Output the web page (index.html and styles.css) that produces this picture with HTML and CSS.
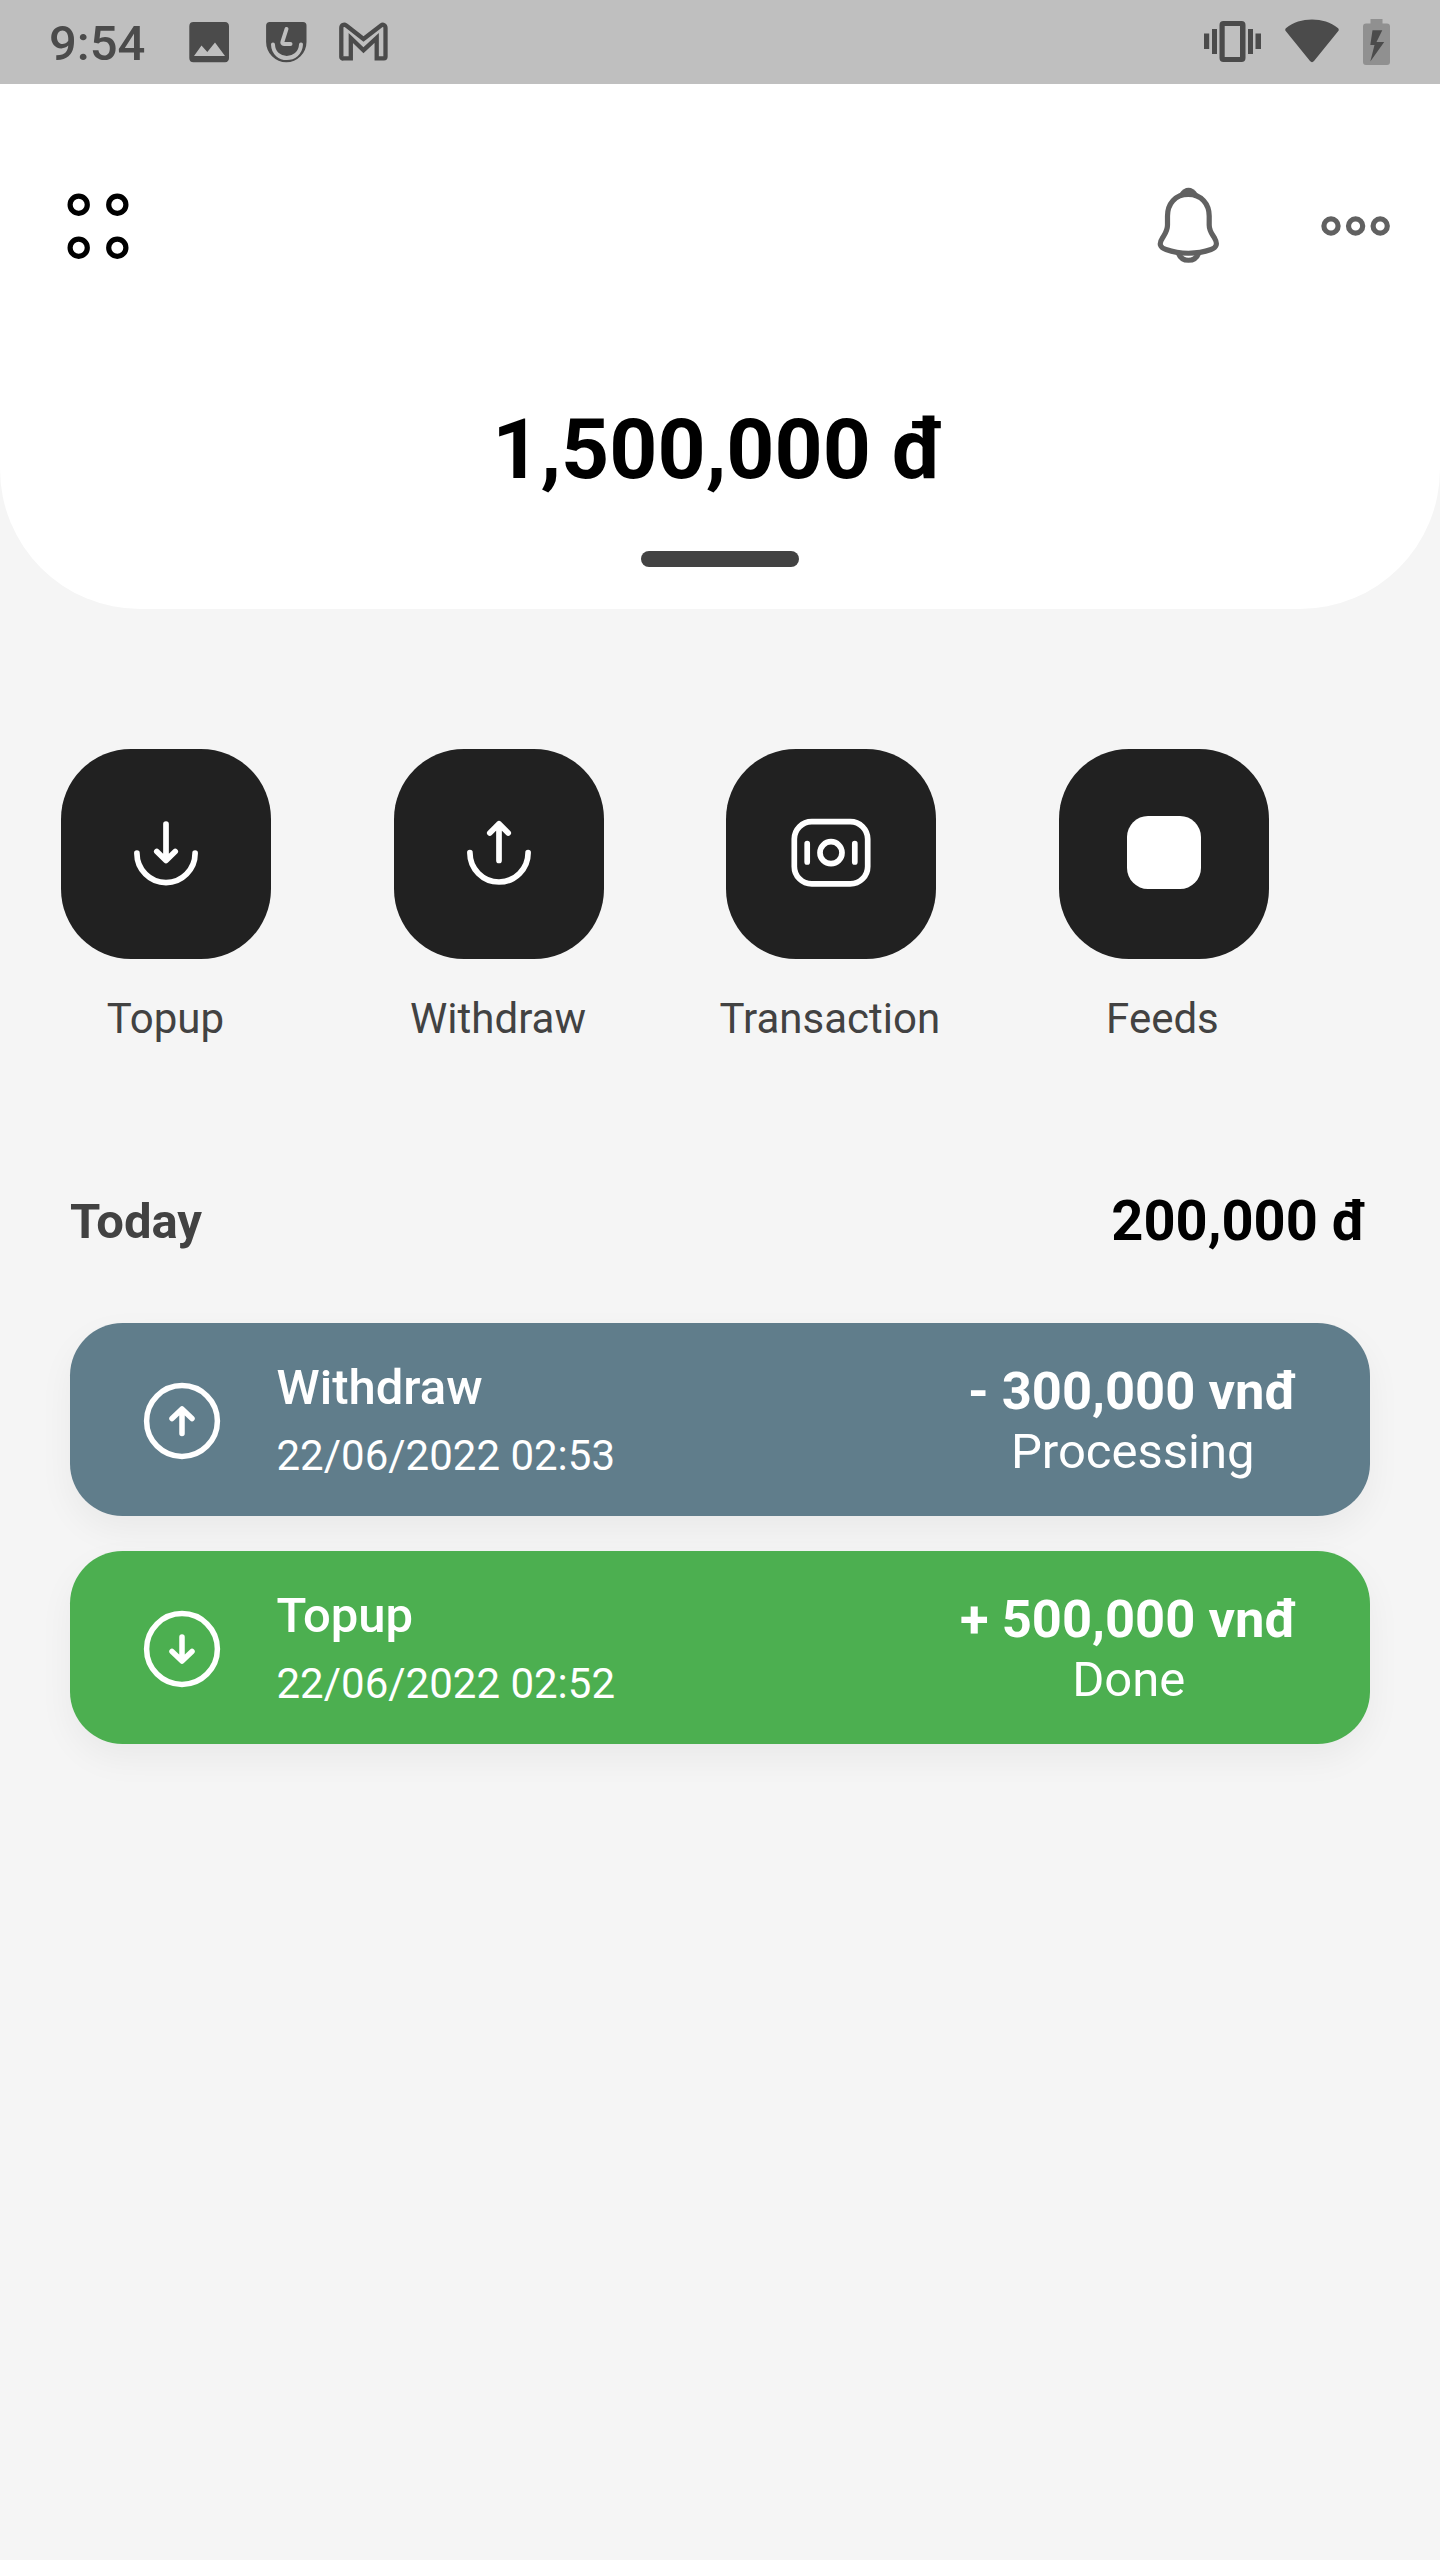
FILE: index.html
```html
<!DOCTYPE html>
<html lang="en">
<head>
<meta charset="utf-8">
<title>Wallet</title>
<link rel="stylesheet" href="styles.css">
</head>
<body>
<div class="status-bar">
  <span class="clock">9:54</span>
  <div class="notifications">
    <svg width="40" height="44" viewBox="0 0 40 44"><path fill-rule="evenodd" fill="currentColor" d="M4.5 2H36a4.3 4.3 0 0 1 4 4.3V38a4.3 4.3 0 0 1-4 4.3H4.5A4.3 4.3 0 0 1 .3 38V6.3A4.3 4.3 0 0 1 4.5 2ZM5 36H36L26 22.5 18.3 32 12.5 25.5Z"/></svg>
    <svg width="41" height="44" viewBox="0 0 41 44"><path fill="currentColor" d="M4 2H37a3.5 3.5 0 0 1 3.5 3.5V22a20.2 20.2 0 0 1-40.4 0V5.5A3.5 3.5 0 0 1 4 2Z"/><g class="knockout"><path d="M7 24.500c.5 18 27 18 28 0"/><path d="M20.500 9 16.500 21.500c-.5 1.500 0 2.500 1.500 2.500h6.500"/></g></svg>
    <svg width="50" height="44" viewBox="0 0 50 44"><path class="gmail" d="M4.500 38.300H11.800V18L24.500 30.200 37.700 18V38.300H45a1.500 1.500 0 0 0 1.500-1.500V8C46.500 5 44 4 42 5.500L24.500 19 7.300 5.500C5 4 2.300 5 2.300 8V36.800A1.500 1.500 0 0 0 4.500 38.300Z"/></svg>
  </div>
  <div class="system">
    <svg width="57" height="46" viewBox="0 0 57 46"><g fill="currentColor"><path d="M0 14.500h5.200v15.500H0ZM8 10h5v25H8ZM44 10h5v25h-5ZM51.500 14.500H57v15.500h-5.500Z"/><path fill-rule="evenodd" d="M19.500 2H37.500a4 4 0 0 1 4 4V39a4 4 0 0 1-4 4H19.500a4 4 0 0 1-4-4V6a4 4 0 0 1 4-4ZM20.700 7V38H36V7Z"/></g></svg>
    <svg width="54" height="46" viewBox="0 0 54 46"><path fill="currentColor" d="M1.200 9C15-2.200 39-2.200 52.800 9c1.200 1 1.200 2 .5 3L29 42c-1.200 1.500-2.800 1.500-4 0L.7 12C0 11 0 10 1.200 9Z"/></svg>
    <svg width="27" height="48" viewBox="0 0 27 48"><path class="cell" d="M7.500 1H19.500V5.500H24a3 3 0 0 1 3 3V44a3 3 0 0 1-3 3H3a3 3 0 0 1-3-3V8.500a3 3 0 0 1 3-3H7.500Z"/><path fill="currentColor" d="M9.500 12.300H19.300L13.500 24H21.200L7.300 43.500 11.500 27H7.300Z"/></svg>
  </div>
</div>

<header class="balance-panel">
  <div class="toolbar">
    <svg class="menu" width="64" height="68" viewBox="0 0 64 68"><circle cx="13.700" cy="12.700" r="8.600"/><circle cx="52.300" cy="12.700" r="8.600"/><circle cx="13.700" cy="55.700" r="8.600"/><circle cx="52.300" cy="55.700" r="8.600"/></svg>
    <div class="tools">
      <svg width="64" height="78" viewBox="0 0 64 78"><path d="M31.300 7.300C18 7.300 10.500 17 10.500 29V38C10.500 44 7.800 47 5.500 51 1.500 57 3 60.500 9 62.500 23 67.500 40 67.500 54 62.500 59.500 60.500 61 57 57.500 51 55 47 52.200 44 52.200 38V29C52.200 17 44.500 7.300 31.300 7.300Z"/><path d="M21.500 66.500c3.500 9 16.500 9 20 0"/><path class="cap" d="M22.500 6.500C27.500-1.200 35.500-1.200 40.500 6.500L42 9H21Z"/></svg>
      <svg width="70" height="20" viewBox="0 0 70 20"><circle cx="10" cy="10" r="7.100"/><circle cx="34.600" cy="10" r="7.100"/><circle cx="59.200" cy="10" r="7.100"/></svg>
    </div>
  </div>
  <div class="balance">1,500,000 đ</div>
  <div class="handle"></div>
</header>

<nav class="actions">
  <div class="action"><div class="tile"><svg width="84" height="84" viewBox="0 0 84 84"><path d="M42 12V47.500M32.800 39.500 42 48.500 51.200 39.500M12.900 41.200a29.100 29.400 0 0 0 58.200 0"/></svg></div><span class="label">Topup</span></div>
  <div class="action"><div class="tile"><svg width="84" height="84" viewBox="0 0 84 84"><path d="M42 48.500V11.800M32.800 21 42 11.800 51.200 21M12.900 40.700a29.100 29.300 0 0 0 58.200 0"/></svg></div><span class="label">Withdraw</span></div>
  <div class="action"><div class="tile"><svg width="84" height="84" viewBox="0 0 84 84"><rect x="5.300" y="9.600" width="73.400" height="62.300" rx="17.500"/><circle cx="42" cy="40.700" r="11"/><path d="M18.200 31.700V50M65.800 31.700V50"/></svg></div><span class="label nudged">Transaction</span></div>
  <div class="action"><div class="tile"><span class="blank"></span></div><span class="label nudged">Feeds</span></div>
</nav>

<section class="history">
  <div class="day"><h2 class="day-name">Today</h2><span class="day-total">200,000 đ</span></div>
  <article class="entry pending">
    <svg width="78" height="78" viewBox="0 0 78 78"><circle cx="39" cy="39" r="35.400"/><path d="M39 51.500V28M29 36.500 39 27 49 36.500"/></svg>
    <div class="info"><div class="kind">Withdraw</div><div class="date">22/06/2022 02:53</div></div>
    <div class="result"><div class="amount">- 300,000 vnđ</div><div class="state">Processing</div></div>
  </article>
  <article class="entry done">
    <svg width="78" height="78" viewBox="0 0 78 78"><circle cx="39" cy="39" r="35.400"/><path d="M39 27V50.500M29 41.500 39 51 49 41.500"/></svg>
    <div class="info"><div class="kind">Topup</div><div class="date">22/06/2022 02:52</div></div>
    <div class="result"><div class="amount">+ 500,000 vnđ</div><div class="state">Done</div></div>
  </article>
</section>
</body>
</html>
```
FILE: styles.css
```css
* { box-sizing: border-box; }

body {
  margin: 0;
  width: 1440px;
  min-height: 2560px;
  background: #f5f5f5;
  font-family: Roboto, sans-serif;
  color: #000;
}

svg { display: block; flex: none; }

/* System status bar */
.status-bar {
  display: flex;
  align-items: center;
  height: 84px;
  padding: 0 50.5px 0 49px;
  background: #bfbfbf;
  color: #4b4b4b;
}
.clock { width: 140px; padding-top: 4px; font-size: 49px; font-weight: 500; line-height: 58px; }
.notifications { display: flex; gap: 37px; }
.notifications svg:last-child { margin-left: -5px; }
.knockout { fill: none; stroke: #bfbfbf; stroke-width: 4; stroke-linecap: round; stroke-linejoin: round; }
.gmail { fill: none; stroke: currentColor; stroke-width: 4.3; }
.system { display: flex; align-items: center; gap: 23.6px; margin-left: auto; }
.cell { fill: #909090; }

/* Balance panel */
.balance-panel {
  height: 525px;
  background: #fff;
  border-radius: 0 0 140px 140px;
}
.toolbar {
  display: flex;
  align-items: center;
  justify-content: space-between;
  height: 284px;
  padding: 0 49px 0 65px;
}
.toolbar svg { fill: none; stroke: #616161; stroke-width: 5.2; }
.toolbar .menu { stroke: #000; }
.toolbar .cap { fill: #616161; stroke: none; }
.tools { display: flex; align-items: center; gap: 100px; }
.balance {
  margin-top: 33px;
  padding-right: 3px;
  font-size: 84px;
  font-weight: 700;
  line-height: 98px;
  text-align: center;
}
.handle {
  width: 158px;
  height: 16px;
  margin: 52px auto 0;
  border-radius: 8px;
  background: #424242;
}

/* Shortcuts */
.actions {
  display: grid;
  grid-template-columns: repeat(4, 210px);
  column-gap: 122.6px;
  padding: 140px 61px 0 61.2px;
}
.action { display: flex; flex-direction: column; align-items: center; gap: 35px; }
.tile {
  display: flex;
  align-items: center;
  justify-content: center;
  width: 210px;
  height: 210px;
  border-radius: 70px;
  background: #212121;
}
.tile svg { fill: none; stroke: #fff; stroke-width: 5.7; stroke-linecap: round; stroke-linejoin: round; }
.blank { width: 73.5px; height: 73.5px; margin-top: -3px; border-radius: 21px; background: #fff; }
.label { padding-right: 1.5px; font-size: 42px; line-height: 50px; color: #424242; white-space: nowrap; }
.nudged { margin-right: 1.5px; }

/* Transactions */
.history { padding: 144px 70px 0; }
.day {
  display: flex;
  align-items: center;
  justify-content: space-between;
  height: 66px;
  margin-bottom: 69px;
  padding-right: 3px;
}
.day-name { margin: 1px 0 0; font-size: 49px; font-weight: 700; line-height: 58px; color: #424242; }
.day-total { font-size: 56px; font-weight: 700; line-height: 66px; }
.entry {
  display: flex;
  align-items: center;
  height: 192.5px;
  margin-bottom: 35.5px;
  padding: 0 72.5px 0 73px;
  border-radius: 52.5px;
  box-shadow: 0 14px 35px rgba(0, 0, 0, .05);
  color: #fff;
}
.pending { background: #607d8b; }
.done { background: #4caf50; }
.entry svg { margin-top: 3.5px; fill: none; stroke: #fff; stroke-width: 5.5; stroke-linecap: round; stroke-linejoin: round; }
.info { margin: 1px 0 0 55.5px; }
.kind { font-size: 49px; font-weight: 500; line-height: 58px; }
.date { margin-top: 14px; font-size: 42px; line-height: 50px; }
.result { margin: 3px 0 0 auto; text-align: center; }
.amount { font-size: 52.5px; font-weight: 700; line-height: 62px; }
.state { font-size: 49px; line-height: 59px; }
```
